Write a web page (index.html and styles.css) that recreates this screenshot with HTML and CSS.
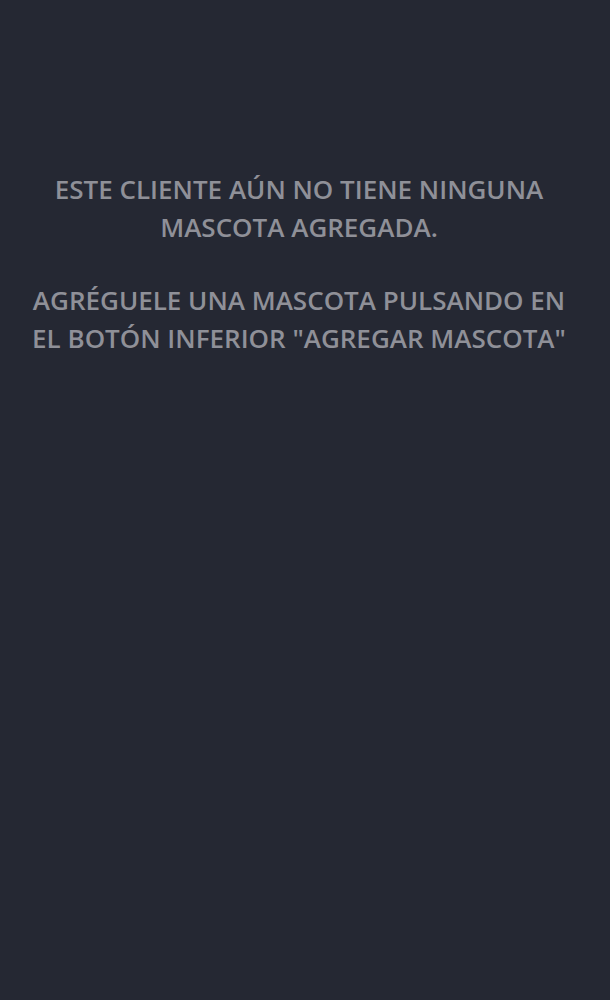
FILE: index.html
```html
<!DOCTYPE html>
<html lang="es">
<head>
<meta charset="utf-8">
<link rel="stylesheet" href="styles.css">
</head>
<body>
<main class="screen">
  <div class="empty">
    <p class="msg">ESTE CLIENTE AÚN NO TIENE NINGUNA MASCOTA AGREGADA.</p>
    <p class="msg">AGRÉGUELE UNA MASCOTA PULSANDO EN EL BOTÓN INFERIOR "AGREGAR MASCOTA"</p>
  </div>
</main>
</body>
</html>
```
FILE: styles.css
```css
html, body {
  margin: 0;
  padding: 0;
  background: #252833;
}
.screen {
  width: 610px;
  height: 1000px;
  box-sizing: border-box;
  padding: 170px 36px 0 24px;
}
.empty {
  display: flex;
  flex-direction: column;
  gap: 35px;
}
.msg {
  margin: 0;
  text-align: center;
  font-family: "Open Sans", "Noto Sans", sans-serif;
  font-weight: 600;
  font-size: 26px;
  line-height: 38px;
  color: #8f9098;
}
```
